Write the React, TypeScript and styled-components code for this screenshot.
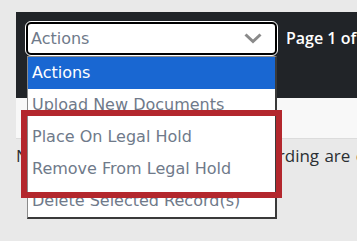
import React from "react";
import styled, { createGlobalStyle } from "styled-components";

const Global = createGlobalStyle`
  html, body { margin: 0; padding: 0; }
  body {
    background: #e9e9e9;
    font-family: "DejaVu Sans", "Liberation Sans", sans-serif;
    overflow: hidden;
  }
`;

const Page = styled.div`
  position: relative;
  width: 357px;
  height: 241px;
  padding: 12px 0 0 16px;
  box-sizing: border-box;
  overflow: hidden;
`;

const Toolbar = styled.div`
  background: #212428;
  height: 86px;
  box-sizing: border-box;
  padding: 10px 0 0 10px;
  display: flex;
  align-items: flex-start;
  gap: 9px;
  width: 400px;
`;

const SelectWrap = styled.div`
  position: relative;
`;

const SelectBox = styled.div`
  width: 251px;
  height: 33px;
  box-sizing: border-box;
  background: #fff;
  border: 2px solid #000;
  border-radius: 5px;
  outline: 1px solid #fff;
  display: flex;
  align-items: center;
  justify-content: space-between;
  padding: 0 13px 0 3px;
  color: #6f7a8a;
  font-size: 16px;
`;

const PageLabel = styled.span`
  color: #fff;
  font-family: "Open Sans", sans-serif;
  font-weight: 600;
  font-size: 16px;
  line-height: 33px;
  white-space: nowrap;
`;

const List = styled.ul`
  position: absolute;
  top: 34px;
  left: 1px;
  width: 250px;
  margin: 0;
  padding: 0;
  list-style: none;
  background: #fff;
  border: 1px solid #8a8a8a;
  border-bottom: 2px solid #3a3a3a;
  border-right: 2px solid #3a3a3a;
  box-sizing: border-box;
  z-index: 2;
`;

const Item = styled.li<{ $active?: boolean }>`
  height: 32px;
  line-height: 32px;
  padding-left: 4px;
  font-size: 16px;
  white-space: nowrap;
  color: ${(p) => (p.$active ? "#fff" : "#6f7a8a")};
  background: ${(p) => (p.$active ? "#1967d2" : "transparent")};
`;

const Strip = styled.div`
  height: 41px;
  box-sizing: border-box;
  background: #f8f8f8;
  border-bottom: 1px solid #dcdcdc;
  width: 400px;
`;

const Note = styled.p`
  margin: 0;
  padding-top: 5px;
  font-family: "Open Sans", sans-serif;
  font-size: 17px;
  word-spacing: 0.9px;
  color: #2b2f33;
  white-space: nowrap;
`;

const Highlight = styled.div`
  position: absolute;
  left: 21px;
  top: 110px;
  width: 261px;
  height: 88px;
  box-sizing: border-box;
  border: 6px solid #b3272d;
  z-index: 3;
  pointer-events: none;
`;

const Chevron = () => (
  <svg width="18" height="11" viewBox="0 0 18 11">
    <path d="M1.5 1.5 L9 8.5 L16.5 1.5" fill="none" stroke="#8a8a8a" strokeWidth="3" />
  </svg>
);

const items = [
  "Actions",
  "Upload New Documents",
  "Place On Legal Hold",
  "Remove From Legal Hold",
  "Delete Selected Record(s)",
];

export default function App() {
  return (
    <>
      <Global />
      <Page>
        <Toolbar>
          <SelectWrap>
            <SelectBox>
              <span>Actions</span>
              <Chevron />
            </SelectBox>
            <List>
              {items.map((t, i) => (
                <Item key={t} $active={i === 0}>
                  {t}
                </Item>
              ))}
            </List>
          </SelectWrap>
          <PageLabel>Page 1 of 1</PageLabel>
        </Toolbar>
        <Strip />
        <Note>Note: Changes to the forms regarding are currently logged.</Note>
        <Highlight />
      </Page>
    </>
  );
}
